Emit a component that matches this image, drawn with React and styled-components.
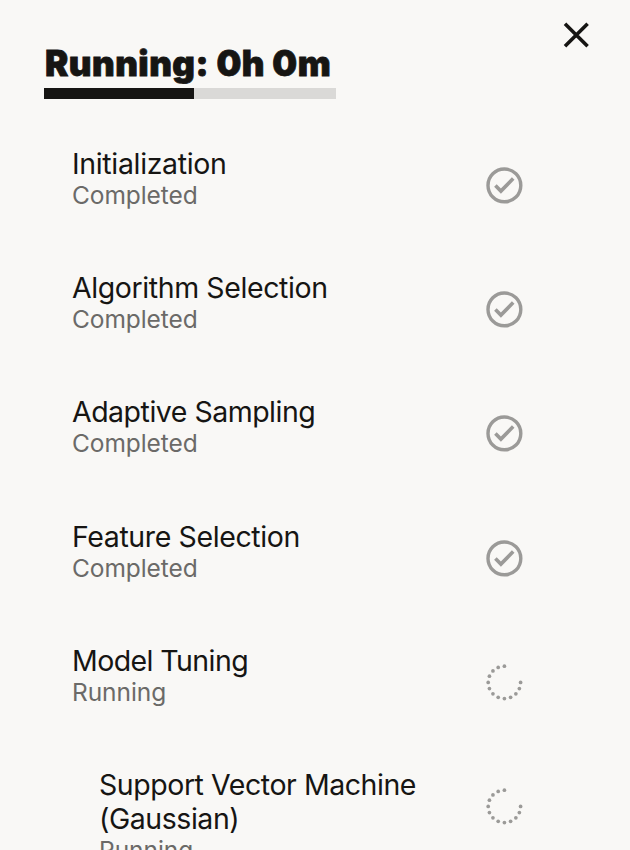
import React from "react";
import styled, { createGlobalStyle } from "styled-components";

const GlobalStyle = createGlobalStyle`
  *, *::before, *::after { box-sizing: border-box; }
  body { margin: 0; background: #f9f8f6; overflow: hidden; }
`;

const Panel = styled.main`
  height: 850px;
  overflow: hidden;
  background: #f9f8f6;
  color: #161513;
  font-family: Inter, "Liberation Sans", sans-serif;
`;

const Header = styled.header`
  display: flex;
  justify-content: space-between;
  align-items: flex-start;
  height: 147px;
  padding: 22px 40px 0 44px;
`;

const Summary = styled.div`
  width: 292px;
  padding-top: 20px;
`;

const Heading = styled.h1`
  margin: 0;
  padding-left: 1px;
  font-size: 35px;
  line-height: 42px;
  font-weight: 900;
  letter-spacing: 0.45px;
  -webkit-text-stroke: 0.8px currentColor;
  white-space: nowrap;
`;

const Track = styled.div`
  height: 11px;
  margin-top: 4px;
  background: #dad9d7;
`;

const Fill = styled.div`
  width: 150px;
  height: 100%;
  background: #161513;
`;

const CloseButton = styled.button`
  display: flex;
  width: 27px;
  height: 27px;
  padding: 0;
  border: 0;
  background: none;
  color: #161513;
`;

const Steps = styled.ul`
  display: flex;
  flex-direction: column;
  gap: 61.2px;
  margin: 0;
  padding: 0 107px 0 72px;
  list-style: none;
`;

const Step = styled.li`
  display: flex;
  justify-content: space-between;
  align-items: flex-start;
  padding-left: ${(p) => (p.$nested ? 27 : 0)}px;
`;

const StepText = styled.div`
  width: 340px;
`;

const Title = styled.div`
  font-size: 28.5px;
  line-height: 34px;
  letter-spacing: ${(p) => p.$tracking}px;
`;

const Status = styled.div`
  font-size: 24.5px;
  line-height: 29px;
  letter-spacing: -0.08px;
  color: #6b6a68;
`;

const StatusIcon = styled.svg`
  flex: none;
  width: 37px;
  height: 37px;
  margin-top: 20px;
  color: #9b9a98;
`;

const CheckIcon = () => (
  <StatusIcon viewBox="0 0 37 37" fill="none" stroke="currentColor" strokeWidth="3.4">
    <circle cx="18.4" cy="18.4" r="16.4" />
    <path d="M9.4 18.6 14.9 24.1 27.2 11.6" strokeWidth="3.6" />
  </StatusIcon>
);

const dots = Array.from({ length: 13 }, (_, i) => {
  const angle = ((i * 22.5) * Math.PI) / 180;
  return { x: 18.4 + 16.2 * Math.cos(angle), y: 18.4 + 16.2 * Math.sin(angle) };
});

const SpinnerIcon = () => (
  <StatusIcon viewBox="0 0 37 37" fill="currentColor">
    {dots.map((d, i) => (
      <circle key={i} cx={d.x} cy={d.y} r="1.85" />
    ))}
  </StatusIcon>
);

const steps = [
  { title: "Initialization", status: "Completed", tracking: -0.34 },
  { title: "Algorithm Selection", status: "Completed", tracking: -0.4 },
  { title: "Adaptive Sampling", status: "Completed", tracking: -0.5 },
  { title: "Feature Selection", status: "Completed", tracking: -0.39 },
  { title: "Model Tuning", status: "Running", tracking: -0.58 },
  { title: "Support Vector Machine (Gaussian)", status: "Running", tracking: -0.45, nested: true },
];

export default function App() {
  return (
    <Panel>
      <GlobalStyle />
      <Header>
        <Summary>
          <Heading>Running: 0h 0m</Heading>
          <Track>
            <Fill />
          </Track>
        </Summary>
        <CloseButton aria-label="Close">
          <svg width="27" height="27" viewBox="0 0 27 27" fill="none" stroke="currentColor" strokeWidth="3.6">
            <path d="M2 1.7 24.6 24.3M24.6 1.7 2 24.3" />
          </svg>
        </CloseButton>
      </Header>
      <Steps>
        {steps.map((s) => (
          <Step key={s.title} $nested={s.nested}>
            <StepText>
              <Title $tracking={s.tracking}>{s.title}</Title>
              <Status>{s.status}</Status>
            </StepText>
            {s.status === "Completed" ? <CheckIcon /> : <SpinnerIcon />}
          </Step>
        ))}
      </Steps>
    </Panel>
  );
}
